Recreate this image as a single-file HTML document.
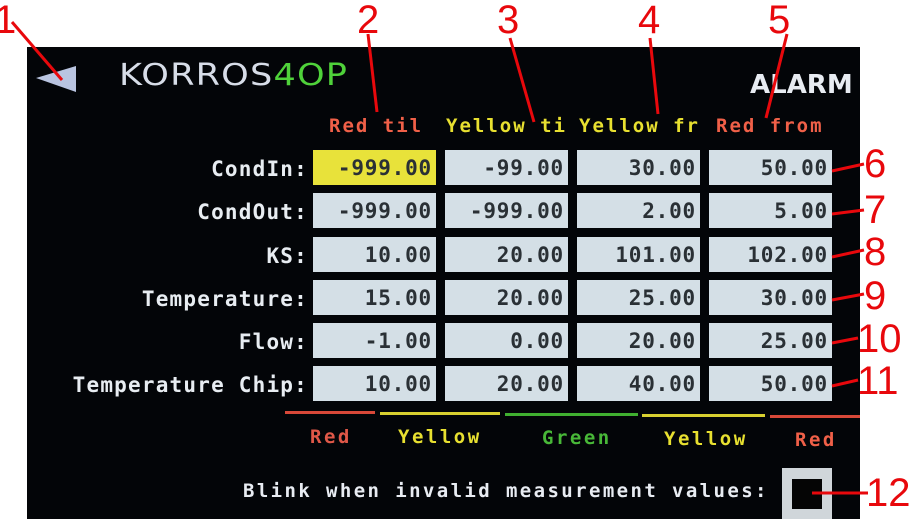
<!DOCTYPE html>
<html><head><style>
body{margin:0;width:916px;height:519px;background:#fff;position:relative;overflow:hidden;font-family:"DejaVu Sans Mono","Liberation Mono",monospace;font-weight:bold}
.scr{position:absolute;left:27px;top:47px;width:833px;height:472px;background:#030508}
.a{position:absolute;white-space:nowrap}
.lbl{position:absolute;right:608px;color:#e8edf2;font-size:21px;letter-spacing:1.2px;text-align:right}
.c{position:absolute;width:123px;height:35px;background:#d4dfe6;color:#2a3035;font-size:21px;text-align:right;box-sizing:border-box;padding-right:4px;line-height:37px;letter-spacing:0.8px}
.hd{position:absolute;top:115px;font-size:19px;letter-spacing:2px}
.bl{position:absolute;font-size:19px;letter-spacing:2.5px}
.n{position:absolute;color:#e8080c;font-family:"Liberation Sans",sans-serif;font-weight:normal;font-size:40px;line-height:40px}
.bar{position:absolute;height:3px}
</style></head><body>
<div class="scr"></div>
<svg class="a" style="left:34px;top:64px" width="44" height="30"><polygon points="2,14 42,2 42,28" fill="#b9c4e0"/></svg>
<div class="a" style="left:119px;top:58px;font-family:'DejaVu Sans','Liberation Sans',sans-serif;font-weight:normal;font-size:30px;color:#d7dde8;letter-spacing:1px;transform:scaleX(1.17);transform-origin:left">KORROS<span style="color:#4fd23a">4OP</span></div>
<div class="a" style="left:750px;top:70px;font-family:'DejaVu Sans',sans-serif;font-size:26px;color:#e8ecf2">ALARM</div>
<div class="hd a" style="left:329px;color:#f06048">Red til</div>
<div class="hd a" style="left:446px;color:#e8e030">Yellow ti</div>
<div class="hd a" style="left:579px;color:#e8e030">Yellow fr</div>
<div class="hd a" style="left:716px;color:#f06048">Red from</div>

<div class="lbl" style="top:157px">CondIn:</div>
<div class="lbl" style="top:200px">CondOut:</div>
<div class="lbl" style="top:244px">KS:</div>
<div class="lbl" style="top:287px">Temperature:</div>
<div class="lbl" style="top:330px">Flow:</div>
<div class="lbl" style="top:373px">Temperature Chip:</div>

<div class="c" style="left:313px;top:150px;background:#e8e23a">-999.00</div>
<div class="c" style="left:445px;top:150px">-99.00</div>
<div class="c" style="left:577px;top:150px">30.00</div>
<div class="c" style="left:709px;top:150px">50.00</div>

<div class="c" style="left:313px;top:193px">-999.00</div>
<div class="c" style="left:445px;top:193px">-999.00</div>
<div class="c" style="left:577px;top:193px">2.00</div>
<div class="c" style="left:709px;top:193px">5.00</div>

<div class="c" style="left:313px;top:237px">10.00</div>
<div class="c" style="left:445px;top:237px">20.00</div>
<div class="c" style="left:577px;top:237px">101.00</div>
<div class="c" style="left:709px;top:237px">102.00</div>

<div class="c" style="left:313px;top:280px">15.00</div>
<div class="c" style="left:445px;top:280px">20.00</div>
<div class="c" style="left:577px;top:280px">25.00</div>
<div class="c" style="left:709px;top:280px">30.00</div>

<div class="c" style="left:313px;top:323px">-1.00</div>
<div class="c" style="left:445px;top:323px">0.00</div>
<div class="c" style="left:577px;top:323px">20.00</div>
<div class="c" style="left:709px;top:323px">25.00</div>

<div class="c" style="left:313px;top:366px">10.00</div>
<div class="c" style="left:445px;top:366px">20.00</div>
<div class="c" style="left:577px;top:366px">40.00</div>
<div class="c" style="left:709px;top:366px">50.00</div>

<div class="bar" style="left:285px;top:411px;width:90px;background:#d84838"></div>
<div class="bar" style="left:380px;top:412px;width:120px;background:#d8d030"></div>
<div class="bar" style="left:505px;top:413px;width:133px;background:#40b030"></div>
<div class="bar" style="left:642px;top:414px;width:123px;background:#d8d030"></div>
<div class="bar" style="left:770px;top:415px;width:90px;background:#d84838"></div>

<div class="bl" style="left:310px;top:426px;color:#e05848">Red</div>
<div class="bl" style="left:398px;top:426px;color:#e8e030">Yellow</div>
<div class="bl" style="left:542px;top:427px;color:#48b838">Green</div>
<div class="bl" style="left:664px;top:428px;color:#e8e030">Yellow</div>
<div class="bl" style="left:795px;top:429px;color:#f06048">Red</div>

<div class="a" style="left:243px;top:480px;font-size:19px;letter-spacing:2.4px;color:#e8ecf2">Blink when invalid measurement values:</div>
<div class="a" style="left:782px;top:468px;width:50px;height:51px;background:#d0d6da"></div>
<div class="a" style="left:792px;top:479px;width:30px;height:30px;background:#050505"></div>

<svg class="a" style="left:0;top:0" width="916" height="519">
<g stroke="#e8080c" stroke-width="3" fill="none">
<line x1="12" y1="22" x2="62" y2="80"/>
<line x1="368" y1="34" x2="377" y2="112"/>
<line x1="510" y1="38" x2="534" y2="122"/>
<line x1="650" y1="38" x2="658" y2="114"/>
<line x1="787" y1="34" x2="766" y2="118"/>
<line x1="832" y1="171" x2="864" y2="164"/>
<line x1="832" y1="214" x2="864" y2="210"/>
<line x1="832" y1="257" x2="864" y2="250"/>
<line x1="832" y1="300" x2="864" y2="294"/>
<line x1="832" y1="343" x2="858" y2="338"/>
<line x1="832" y1="386" x2="858" y2="380"/>
<line x1="812" y1="493" x2="868" y2="493"/>
</g></svg>
<div class="n" style="left:-6px;top:0">1</div>
<div class="n" style="left:357px;top:0">2</div>
<div class="n" style="left:497px;top:0">3</div>
<div class="n" style="left:638px;top:0">4</div>
<div class="n" style="left:768px;top:0">5</div>
<div class="n" style="left:864px;top:144px">6</div>
<div class="n" style="left:864px;top:190px">7</div>
<div class="n" style="left:864px;top:232px">8</div>
<div class="n" style="left:864px;top:276px">9</div>
<div class="n" style="left:857px;top:319px">10</div>
<div class="n" style="left:857px;top:361px">11</div>
<div class="n" style="left:866px;top:473px">12</div>
</body></html>
